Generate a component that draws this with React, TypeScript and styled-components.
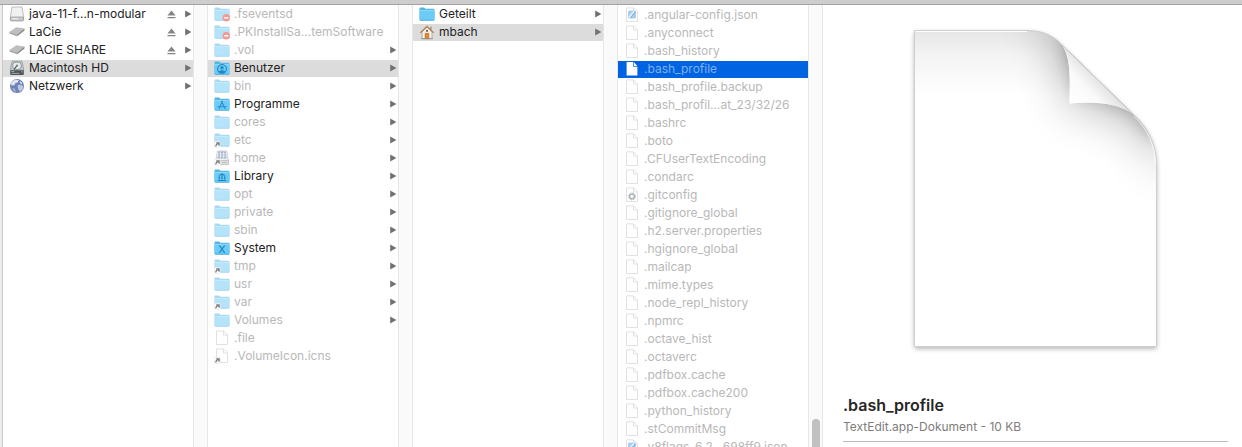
import React from "react";
import styled, { createGlobalStyle, css } from "styled-components";

const GlobalStyle = createGlobalStyle`
  * { box-sizing: border-box; }
  body { margin: 0; background: #fff; overflow: hidden; font-family: Inter, "Liberation Sans", sans-serif; }
  button { font: inherit; color: inherit; background: none; border: 0; padding: 0; }
`;

const Window = styled.div`
  display: flex;
  flex-direction: column;
  height: 100vh;
`;

const Toolbar = styled.header`
  flex: none;
  height: 5px;
  background: #cdcdcd;
  border-bottom: 1px solid #a2a2a2;
`;

const Browser = styled.main`
  flex: 1;
  min-height: 0;
  display: flex;
`;

const WindowEdge = styled.div`
  flex: none;
  width: 3px;
  background: #ececec;
  border-right: 1px solid #c9c9c9;
`;

const Gutter = styled.div`
  flex: none;
  width: 15px;
  display: flex;
  flex-direction: column;
  align-items: center;
  justify-content: flex-end;
  background: #fafafa;
  border: solid #e7e7e7;
  border-width: 0 1px;
`;

const ScrollThumb = styled.div`
  width: 8px;
  height: 28px;
  border-radius: 4px 4px 0 0;
  background: #c1c1c1;
`;

const Column = styled.ul<{ $top: number }>`
  flex: none;
  width: 190px;
  margin: 0;
  padding: ${(p) => p.$top}px 0 0;
  list-style: none;
  overflow: hidden;
`;

type RowState = "open" | "active" | undefined;

const Row = styled.li<{ $state: RowState; $dim?: boolean }>`
  display: flex;
  align-items: center;
  height: 17px;
  margin-bottom: 1px;
  padding: 0 1px 1px 6px;
  color: ${(p) => (p.$dim ? "#b8b8b8" : "#222")};
  ${(p) => p.$state === "open" && css`background: #dcdcdc;`}
  ${(p) => p.$state === "active" && css`background: #0063e1; color: #7fb0f0;`}
`;

const Entry = styled.button`
  flex: 1;
  min-width: 0;
  height: 16px;
  display: flex;
  align-items: center;
  gap: 4px;
  font-size: 12px;
  line-height: 16px;
  text-align: left;
  white-space: nowrap;
`;

const IconBox = styled.span<{ $dim?: boolean }>`
  flex: none;
  display: flex;
  opacity: ${(p) => (p.$dim ? 0.5 : 1)};
`;

const EjectButton = styled.button`
  display: flex;
  margin-right: 9px;
`;

const Preview = styled.section`
  flex: 1;
  min-width: 0;
  padding: 17px 14px 0 20px;
  display: flex;
  flex-direction: column;
`;

const PreviewArt = styled.div`
  display: flex;
  justify-content: center;
  margin-bottom: 37px;
`;

const Title = styled.h1`
  margin: 0 0 4px;
  font-size: 16px;
  line-height: 20px;
  font-weight: 600;
  color: #262626;
`;

const Subtitle = styled.p`
  margin: 0;
  padding-bottom: 6px;
  border-bottom: 1px solid #bcbcbc;
  font-size: 12px;
  line-height: 16px;
  color: #7d7d7d;
`;

type IconName =
  | "drive" | "external" | "hd" | "network" | "folder" | "locked" | "users" | "apps"
  | "alias" | "netdrive" | "library" | "system" | "file" | "filealias" | "activefile"
  | "json" | "config" | "house";

const FolderShape = () => (
  <>
    <path d="M0.5 13.6V2.6q0-1 1-1h3.6l1.3 1.2h8.1q1 0 1 1v9.8q0 .9-1 .9h-13q-1 0-1-.9z" fill="#4fb3e3" />
    <path d="M0.5 4.6h15v8.7q0 .7-.8.7H1.3q-.8 0-.8-.7z" fill="#6dcbf7" />
    <path d="M0.5 4.4h15" stroke="#94dcfb" strokeWidth="1" />
    <path d="M1 14.2h14" stroke="#45a9da" strokeWidth="0.8" />
  </>
);

const AliasBadge = () => (
  <>
    <rect x="0.3" y="9.3" width="6" height="6.4" rx="1" fill="#fff" stroke="#bbb" strokeWidth="0.5" />
    <path d="M1.8 14.6c0-1.8.6-2.7 2.6-3M2.2 10.8h2.9v2.9" fill="none" stroke="#000" strokeWidth="1.3" />
  </>
);

const FileShape = () => (
  <path
    d="M2.5 0.9h7.2l3.8 3.9v9.7h-11zM9.5 1v4h3.9"
    fill="#fff"
    stroke="#bdbdbd"
    strokeWidth="0.9"
    strokeLinejoin="round"
  />
);

const Icon = ({ name }: { name: IconName }) => {
  const art = () => {
    switch (name) {
      case "drive":
        return (
          <>
            <path d="M3 1h10l1.6 9.4v3.4q0 1-1 1H2.4q-1 0-1-1v-3.4z" fill="#f1f1f1" stroke="#b0b0b0" strokeWidth="0.8" />
            <path d="M1.5 11h13v2.8q0 1-1 1h-11q-1 0-1-1z" fill="#c9c9c9" stroke="#9a9a9a" strokeWidth="0.7" />
            <path d="M3 12.8h6" stroke="#f5f5f5" />
          </>
        );
      case "external":
        return (
          <>
            <path d="M0.3 8 7.3 3.2l8.2 1.4-7.3 5.8z" fill="#bebebe" />
            <path d="M0.3 8l7.9 2.4v1.8L0.5 9.6z" fill="#a0a0a0" />
            <path d="M8.2 10.400l7.3-5.8v1.800l-7.3 5.800z" fill="#868686" />
          </>
        );
      case "hd":
        return (
          <>
            <path d="M3 1.200h10l1.800 9H1.200z" fill="#c3cacb" stroke="#8a9496" strokeWidth="0.7" />
            <ellipse cx="8" cy="5.800" rx="4.300" ry="3.700" fill="#e6eaeb" stroke="#7b8588" strokeWidth="0.8" />
            <path d="M8 5.600l-3 3.800" stroke="#495356" strokeWidth="1.1" />
            <circle cx="8" cy="5.600" r="1.100" fill="#7a8487" />
            <path d="M1.200 10.200h13.600v4q0 .8-.8.8H2q-.8 0-.8-.8z" fill="#4c5658" />
            <path d="M2.400 11.600h3M2.400 13.400h8M12 11.900h1.600" stroke="#a9b4b6" strokeWidth="0.9" />
          </>
        );
      case "network":
        return (
          <>
            <circle cx="8" cy="8" r="7" fill="#6e82b6" />
            <path d="M3 3.600l3.200-2 3.600.6-1.200 2.400-2.400.6-.8 2.400-2.800-.4-1-1.600z" fill="#dfe5f4" />
            <path d="M8.400 7.600l3-1.200 2.800 1.800-.6 3-2.600 2.600-1.600-2.400z" fill="#bdc8e4" />
            <path d="M3 10l2.800.6 1 2.600-1.400.8z" fill="#a8b5da" />
            <path d="M2 11.600a6.900 6.900 0 0 0 12 0 6.600 6 0 0 1-12 0z" fill="#35426f" />
            <path d="M10.600 3l2 1.400.6 1.800-1.800-.8z" fill="#eef1fa" />
          </>
        );
      case "locked":
        return (
          <>
            <FolderShape />
            <circle cx="12.3" cy="11.800" r="3.700" fill="#ef2f24" />
            <path d="M10.200 11.800h4.200" stroke="#fff" strokeWidth="1.5" />
          </>
        );
      case "users":
        return (
          <>
            <FolderShape />
            <circle cx="8" cy="8.900" r="4.400" fill="none" stroke="#2289c6" strokeWidth="1.1" />
            <circle cx="8" cy="7.700" r="1.700" fill="#2289c6" />
            <path d="M4.800 11.700c.8-2 5.600-2 6.400 0-1.400 2-5 2-6.400 0z" fill="#2289c6" />
          </>
        );
      case "apps":
        return (
          <>
            <FolderShape />
            <path d="M8.600 5L5 12.800M7.400 5l3.600 7.800M3.400 10.700h9.200" fill="none" stroke="#2590cf" strokeWidth="1.1" />
          </>
        );
      case "library":
        return (
          <>
            <FolderShape />
            <path d="M4 7.600l4-2.400 4 2.400zM4.600 8.300h1.300v3.200H4.600zM7.300 8.300h1.400v3.200H7.300zM10.100 8.300h1.300v3.200h-1.300zM3.800 12h8.400v1.100H3.800z" fill="#1f86c4" />
          </>
        );
      case "system":
        return (
          <>
            <FolderShape />
            <path d="M5.300 5.400l5.400 7.400M10.700 5.400l-5.400 7.400" stroke="#2b8bc9" strokeWidth="1.3" />
          </>
        );
      case "alias":
        return (<><FolderShape /><AliasBadge /></>);
      case "netdrive":
        return (
          <>
            <path d="M3.400 1h9.400l1.800 10H1.800z" fill="#dfe3ea" stroke="#8e96a8" strokeWidth="0.8" />
            <path d="M4.400 1.600h7.400l.8 7H3.600z" fill="#4f689c" />
            <path d="M4 3.900h8M4 6.200h8.400M6.600 2v6.600M9.600 2v6.600" stroke="#eef2fa" strokeWidth="0.7" />
            <path d="M1.800 10.600h12.800v4H1.800z" fill="#c6c6c6" stroke="#777" strokeWidth="0.8" />
            <path d="M8 12.600h5" stroke="#777" />
            <AliasBadge />
          </>
        );
      case "file":
        return <FileShape />;
      case "filealias":
        return (<><FileShape /><AliasBadge /></>);
      case "activefile":
        return <path d="M2.600 1h6.700v4.800h4.100v8.800H2.600zM10 1.200l3.300 3.800H10z" fill="#fff" />;
      case "json":
        return (
          <>
            <FileShape />
            <rect x="4" y="3.600" width="8" height="8" rx="1.400" fill="#4ba6ee" />
            <path d="M5 10.400l5.200-6" stroke="#e8f3fc" strokeWidth="1.5" />
            <path d="M6.600 10.600l4.600-5.400" stroke="#3b5068" strokeWidth="1.1" />
          </>
        );
      case "config":
        return (
          <>
            <FileShape />
            <circle cx="8" cy="9.400" r="2.400" fill="none" stroke="#5d6b73" strokeWidth="1.4" />
            <circle cx="8" cy="9.400" r="3.500" fill="none" stroke="#5d6b73" strokeWidth="1" strokeDasharray="1.4 1.35" />
          </>
        );
      case "house":
        return (
          <>
            <path d="M3 8l5-5 5 5v6.600H3z" fill="#f3f0ea" stroke="#999" strokeWidth="0.7" />
            <path d="M11 2.600h1.800v3.800L11 4.800z" fill="#a5a5a5" />
            <path d="M1.400 8.700L8 2.400l6.600 6.300" fill="none" stroke="#b9864f" strokeWidth="1.4" />
            <circle cx="8" cy="6.900" r="1.100" fill="#666" />
            <path d="M6.200 9.400h3.600v5.200H6.200z" fill="#e8871e" stroke="#a95d14" strokeWidth="0.6" />
            <path d="M2 14.700h12" stroke="#8f8f8f" strokeWidth="0.8" />
          </>
        );
      default:
        return <FolderShape />;
    }
  };
  return (
    <svg width="16" height="16" viewBox="0 0 16 16" aria-hidden="true">
      {art()}
    </svg>
  );
};

const Triangle = () => (
  <svg width="7" height="8" viewBox="0 0 7 8" aria-hidden="true">
    <path d="M0.2 0.600v6.800L6.400 4z" fill="#717171" />
  </svg>
);

const Eject = () => (
  <svg width="9" height="9" viewBox="0 0 9 9" aria-hidden="true">
    <path d="M4.500 0.600L8.600 5.600H0.400zM0.500 7h8v1.300h-8z" fill="#858585" />
  </svg>
);

interface Item {
  label: string;
  icon: IconName;
  dim?: boolean;
  leaf?: boolean;
  eject?: boolean;
  state?: RowState;
}

const dimFolder = (label: string, icon: IconName = "folder"): Item => ({ label, icon, dim: true });
const dimFile = (label: string, icon: IconName = "file"): Item => ({ label, icon, dim: true, leaf: true });

const volumes: Item[] = [
  { label: "java-11-f…n-modular", icon: "drive", eject: true },
  { label: "LaCie", icon: "external", eject: true },
  { label: "LACIE SHARE", icon: "external", eject: true },
  { label: "Macintosh HD", icon: "hd", state: "open" },
  { label: "Netzwerk", icon: "network" },
];

const root: Item[] = [
  dimFile(".fseventsd", "locked"),
  dimFile(".PKInstallSa…temSoftware", "locked"),
  dimFolder(".vol"),
  { label: "Benutzer", icon: "users", state: "open" },
  dimFolder("bin"),
  { label: "Programme", icon: "apps" },
  dimFolder("cores"),
  dimFolder("etc", "alias"),
  dimFolder("home", "netdrive"),
  { label: "Library", icon: "library" },
  dimFolder("opt"),
  dimFolder("private"),
  dimFolder("sbin"),
  { label: "System", icon: "system" },
  dimFolder("tmp", "alias"),
  dimFolder("usr"),
  dimFolder("var", "alias"),
  dimFolder("Volumes"),
  dimFile(".file"),
  dimFile(".VolumeIcon.icns", "filealias"),
];

const users: Item[] = [
  { label: "Geteilt", icon: "folder" },
  { label: "mbach", icon: "house", state: "open" },
];

const home: Item[] = [
  dimFile(".angular-config.json", "json"),
  dimFile(".anyconnect"),
  dimFile(".bash_history"),
  { label: ".bash_profile", icon: "activefile", leaf: true, state: "active" },
  dimFile(".bash_profile.backup"),
  dimFile(".bash_profil…at_23/32/26"),
  dimFile(".bashrc"),
  dimFile(".boto"),
  dimFile(".CFUserTextEncoding"),
  dimFile(".condarc"),
  dimFile(".gitconfig", "config"),
  dimFile(".gitignore_global"),
  dimFile(".h2.server.properties"),
  dimFile(".hgignore_global"),
  dimFile(".mailcap"),
  dimFile(".mime.types"),
  dimFile(".node_repl_history"),
  dimFile(".npmrc"),
  dimFile(".octave_hist"),
  dimFile(".octaverc"),
  dimFile(".pdfbox.cache"),
  dimFile(".pdfbox.cache200"),
  dimFile(".python_history"),
  dimFile(".stCommitMsg"),
  dimFile(".v8flags-6.2…698ff9.json", "json"),
];

const FileColumn = ({ items, top = 1 }: { items: Item[]; top?: number }) => (
  <Column $top={top}>
    {items.map((item) => (
      <Row key={item.label} $state={item.state} $dim={item.dim}>
        <Entry type="button">
          <IconBox $dim={item.dim}>
            <Icon name={item.icon} />
          </IconBox>
          {item.label}
        </Entry>
        {item.eject && (
          <EjectButton type="button" aria-label={`${item.label} auswerfen`}>
            <Eject />
          </EjectButton>
        )}
        {!item.leaf && <Triangle />}
      </Row>
    ))}
  </Column>
);

const OUTLINE = "M914.5 30.5H1027C1045 30.5 1055 37 1063 46L1133 114C1149 128 1156.5 146 1156.5 165V346.5H914.5z";
const SHEET = "M914.5 30.5H1027C1045 30.5 1055 37 1063 46C1071 60 1070 80 1069.5 103.5C1095 101 1118 103 1133 114C1149 128 1156.5 146 1156.5 165V346.5H914.5z";
const FOLD = "M1063 46C1071 60 1070 80 1069.5 103.5C1095 101 1118 103 1133 114z";

const DocumentArt = () => (
  <svg width="261" height="336" viewBox="905 22 261 336" role="img" aria-label="Dokument">
    <defs>
      <linearGradient id="sheetTop" x1="0" y1="30" x2="0" y2="95" gradientUnits="userSpaceOnUse">
        <stop offset="0" stopColor="#e6e6e6" />
        <stop offset="0.4" stopColor="#f4f4f4" />
        <stop offset="1" stopColor="#fff" />
      </linearGradient>
      <linearGradient id="foldFill" x1="1070" y1="104" x2="1100" y2="76" gradientUnits="userSpaceOnUse">
        <stop offset="0" stopColor="#fff" />
        <stop offset="0.55" stopColor="#fafafa" />
        <stop offset="1" stopColor="#dedede" />
      </linearGradient>
      <filter id="shadow" x="-10%" y="-10%" width="120%" height="120%">
        <feGaussianBlur stdDeviation="2.5" />
      </filter>
      <filter id="wide" x="880" y="-80" width="400" height="420" filterUnits="userSpaceOnUse">
        <feGaussianBlur stdDeviation="24" />
      </filter>
      <filter id="tight" x="980" y="0" width="220" height="240" filterUnits="userSpaceOnUse">
        <feGaussianBlur stdDeviation="8" />
      </filter>
      <clipPath id="sheetClip"><path d={SHEET} /></clipPath>
    </defs>
    <path d={OUTLINE} transform="translate(0 2)" fill="#000" opacity="0.32" filter="url(#shadow)" />
    <path d={OUTLINE} fill="#fff" />
    <g clipPath="url(#sheetClip)">
      <rect x="914" y="30" width="243" height="317" fill="url(#sheetTop)" />
      <path d="M1030 12L1062 40L1069 104L1133 114L1166 172L1200 60L1100 0z" fill="#000" opacity="0.3" filter="url(#wide)" />
      <path d="M1063 46L1072 70L1077 96L1100 98L1133 112L1154 140L1180 110L1100 20z" fill="#000" opacity="0.22" filter="url(#tight)" />
    </g>
    <path d={FOLD} fill="url(#foldFill)" />
    <path d="M1063 46L1133 114" stroke="#bdbdbd" />
    <path d={OUTLINE} fill="none" stroke="#c9c9c9" strokeWidth="0.9" />
    <path d="M915.5 31.5H1027" stroke="#fff" />
    <path d="M1134 116.500C1148 129 1155.500 147 1155.500 165" fill="none" stroke="#fff" opacity="0.7" />
  </svg>
);

export default function App() {
  return (
    <>
      <GlobalStyle />
      <Window>
        <Toolbar />
        <Browser>
          <WindowEdge />
          <FileColumn items={volumes} />
          <Gutter />
          <FileColumn items={root} />
          <Gutter />
          <FileColumn items={users} />
          <Gutter />
          <FileColumn items={home} top={2} />
          <Gutter>
            <ScrollThumb />
          </Gutter>
          <Preview>
            <PreviewArt>
              <DocumentArt />
            </PreviewArt>
            <Title>.bash_profile</Title>
            <Subtitle>TextEdit.app-Dokument - 10 KB</Subtitle>
          </Preview>
        </Browser>
      </Window>
    </>
  );
}
